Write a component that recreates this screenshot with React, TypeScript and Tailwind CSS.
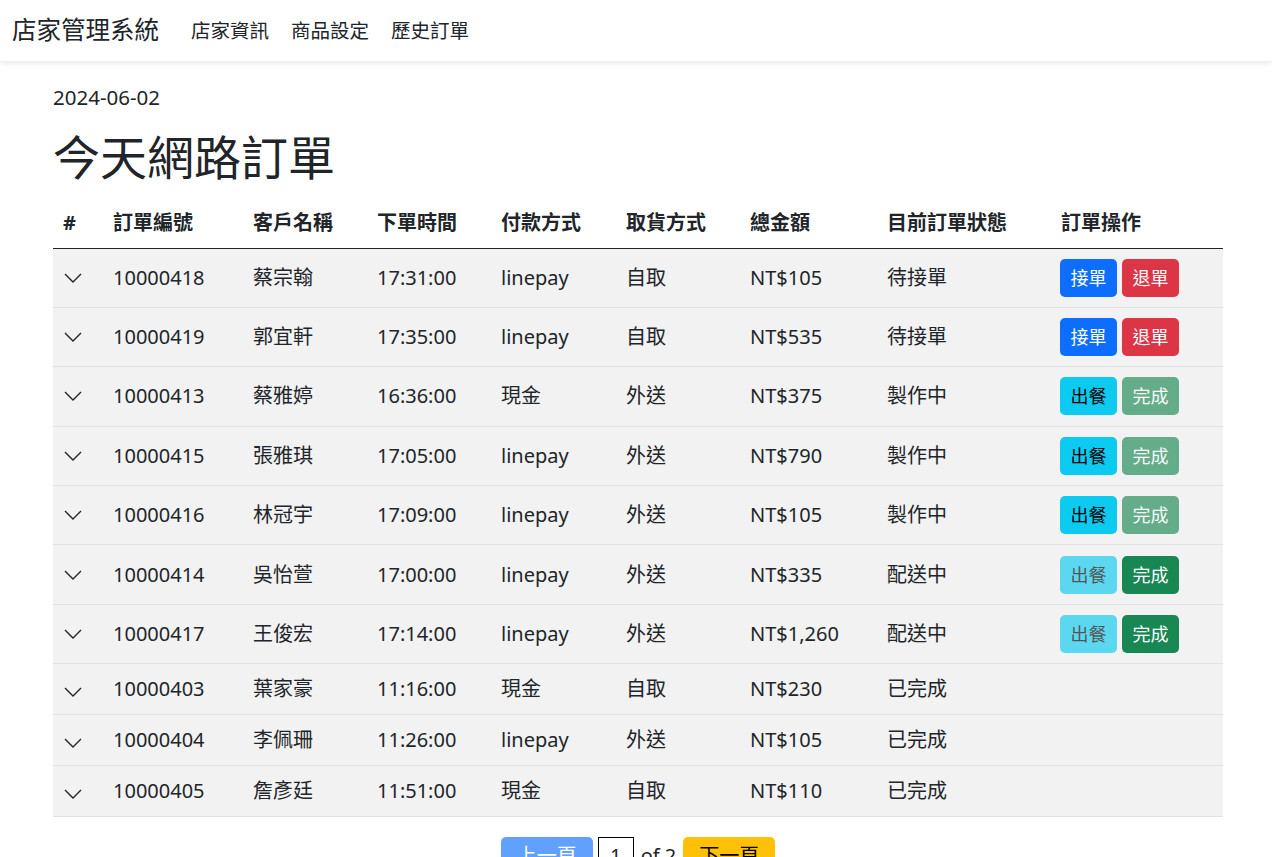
const orders = [
  { id: "10000418", name: "蔡宗翰", time: "17:31:00", pay: "linepay", pick: "自取", total: "NT$105", status: "待接單" },
  { id: "10000419", name: "郭宜軒", time: "17:35:00", pay: "linepay", pick: "自取", total: "NT$535", status: "待接單" },
  { id: "10000413", name: "蔡雅婷", time: "16:36:00", pay: "現金", pick: "外送", total: "NT$375", status: "製作中" },
  { id: "10000415", name: "張雅琪", time: "17:05:00", pay: "linepay", pick: "外送", total: "NT$790", status: "製作中" },
  { id: "10000416", name: "林冠宇", time: "17:09:00", pay: "linepay", pick: "外送", total: "NT$105", status: "製作中" },
  { id: "10000414", name: "吳怡萱", time: "17:00:00", pay: "linepay", pick: "外送", total: "NT$335", status: "配送中" },
  { id: "10000417", name: "王俊宏", time: "17:14:00", pay: "linepay", pick: "外送", total: "NT$1,260", status: "配送中" },
  { id: "10000403", name: "葉家豪", time: "11:16:00", pay: "現金", pick: "自取", total: "NT$230", status: "已完成" },
  { id: "10000404", name: "李佩珊", time: "11:26:00", pay: "linepay", pick: "外送", total: "NT$105", status: "已完成" },
  { id: "10000405", name: "詹彥廷", time: "11:51:00", pay: "現金", pick: "自取", total: "NT$110", status: "已完成" },
];

const btn = "h-[38px] w-[57px] rounded-[5px] text-[18px] leading-none";

const Actions = ({ status }: { status: string }) => {
  if (status === "待接單")
    return (
      <div className="flex gap-[5px]">
        <button className={`${btn} bg-[#0d6efd] text-white`}>接單</button>
        <button className={`${btn} bg-[#dc3545] text-white`}>退單</button>
      </div>
    );
  if (status === "製作中")
    return (
      <div className="flex gap-[5px]">
        <button className={`${btn} bg-[#0dcaf0] text-black`}>出餐</button>
        <button className={`${btn} bg-[#198754] text-white opacity-65`}>完成</button>
      </div>
    );
  if (status === "配送中")
    return (
      <div className="flex gap-[5px]">
        <button className={`${btn} bg-[#0dcaf0] text-black opacity-65`}>出餐</button>
        <button className={`${btn} bg-[#198754] text-white`}>完成</button>
      </div>
    );
  return null;
};

const Chevron = () => (
  <svg width="18" height="10" viewBox="0 0 18 10" fill="none" stroke="#212529" strokeWidth="1.4">
    <path d="M1 1l8 8 8-8" />
  </svg>
);

export default function App() {
  const font = { fontFamily: '"Noto Sans", "Noto Sans CJK TC", sans-serif' };
  return (
    <div className="min-h-screen bg-white text-[#212529]" style={font}>
      {/* Navbar */}
      <nav className="flex h-[61px] items-center bg-white px-[12px] shadow-[0_2px_6px_rgba(0,0,0,0.1)]">
        <span className="text-[24.5px] leading-none">店家管理系統</span>
        <div className="ml-[32px] flex gap-[22px] text-[19.5px] leading-none">
          <span>店家資訊</span>
          <span>商品設定</span>
          <span>歷史訂單</span>
        </div>
      </nav>

      <div className="ml-[53px] w-[1170px] pt-[24px]">
        <div className="text-[20.5px] leading-[24px]">2024-06-02</div>
        <h1 className="mt-[20px] text-[47px] leading-[56px] font-normal">今天網路訂單</h1>

        <table className="mt-[13px] w-full border-collapse text-[20px]">
          <thead>
            <tr className="h-[50px] border-b border-[#212529] font-bold text-left">
              <th className="w-[52px] pl-[10px] font-bold">#</th>
              <th className="w-[140px] pl-[8px] font-bold">訂單編號</th>
              <th className="w-[124px] pl-[8px] font-bold">客戶名稱</th>
              <th className="w-[124px] pl-[8px] font-bold">下單時間</th>
              <th className="w-[125px] pl-[8px] font-bold">付款方式</th>
              <th className="w-[124px] pl-[8px] font-bold">取貨方式</th>
              <th className="w-[137px] pl-[8px] font-bold">總金額</th>
              <th className="w-[174px] pl-[8px] font-bold">目前訂單狀態</th>
              <th className="pl-[8px] font-bold">訂單操作</th>
            </tr>
          </thead>
          <tbody>
            {orders.map((o) => {
              const done = o.status === "已完成";
              return (
                <tr
                  key={o.id}
                  className={`${done ? "h-[51px]" : "h-[59.4px]"} border-b border-[#dee2e6] bg-[#f2f2f2]`}
                >
                  <td className={`pl-[11px] ${done ? "pt-[6px]" : ""}`}>
                    <Chevron />
                  </td>
                  <td className="pl-[8px]">{o.id}</td>
                  <td className="pl-[8px]">{o.name}</td>
                  <td className="pl-[8px]">{o.time}</td>
                  <td className="pl-[8px]">{o.pay}</td>
                  <td className="pl-[8px]">{o.pick}</td>
                  <td className="pl-[8px]">{o.total}</td>
                  <td className="pl-[8px]">{o.status}</td>
                  <td className="pl-[7px]">
                    <Actions status={o.status} />
                  </td>
                </tr>
              );
            })}
          </tbody>
        </table>

        <div className="mt-[20px] flex items-center justify-center gap-[5px] pb-[20px] text-[20px]">
          <button className="h-[38px] w-[92px] rounded-[5px] bg-[#0d6efd] text-white opacity-65">上一頁</button>
          <div className="flex h-[38px] w-[36px] items-center justify-center border border-black">1</div>
          <span className="px-[2px]">of 2</span>
          <button className="h-[38px] w-[92px] rounded-[5px] bg-[#ffc107] text-black">下一頁</button>
        </div>
      </div>
    </div>
  );
}
